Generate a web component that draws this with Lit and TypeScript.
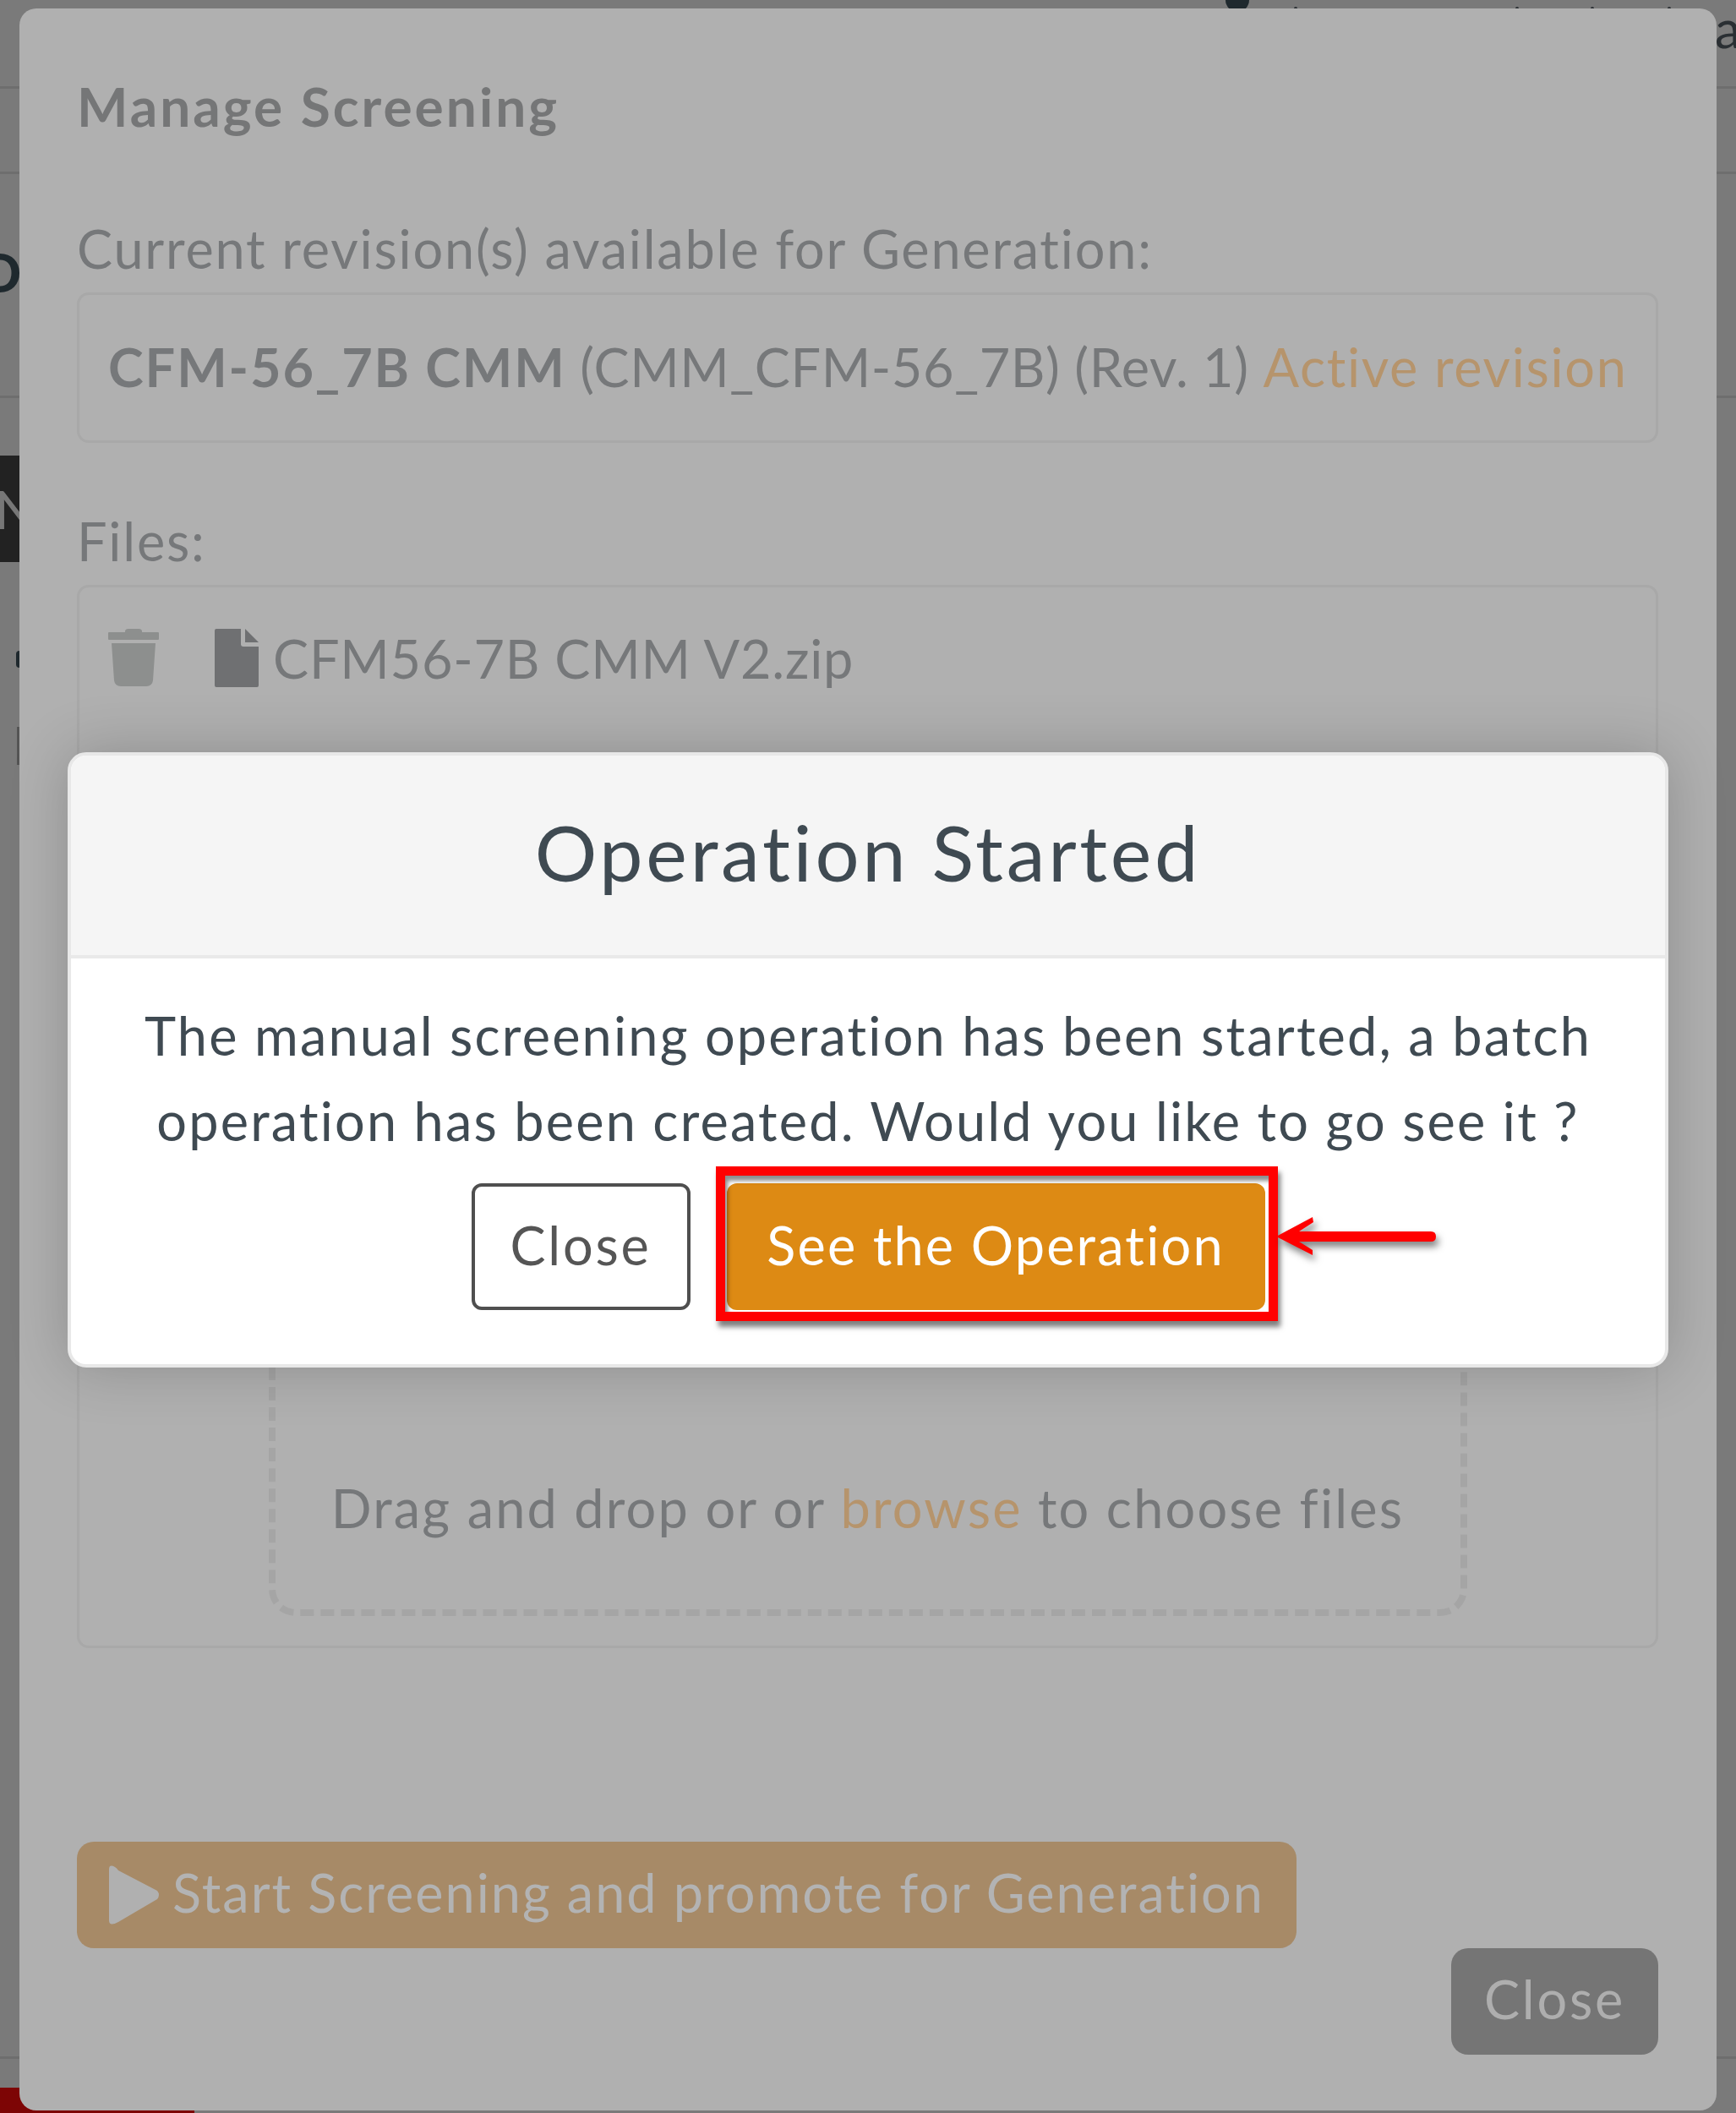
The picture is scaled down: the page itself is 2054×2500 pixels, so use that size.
import { LitElement, html, css } from "lit";
import { customElement } from "lit/decorators.js";

@customElement("app-root")
export class AppRoot extends LitElement {
  static styles = css`
    :host { display: block; position: relative; width: 2054px; height: 2500px; overflow: hidden; background: #7a7a7a; font-family: Lato, "Noto Sans", sans-serif; }
    * { box-sizing: border-box; }
    .behind { position: absolute; }
    .ln { left: 0; width: 2054px; height: 3px; background: #6e6e6e; }
    .l1 { top: 102px; } .l2 { top: 203px; } .l3 { top: 468px; } .l4 { top: 2433px; }
    .d { left: -22px; top: 291px; font: 900 62px/1 Lato, sans-serif; color: #1f292e; }
    .nbox { left: 0; top: 539px; width: 23px; height: 126px; background: #222; color: #777; font: 400 62px/126px Lato, sans-serif; overflow: hidden; text-indent: -6px; }
    .dot { left: 19px; top: 770px; width: 8px; height: 20px; border-radius: 4px; background: #1f292e; }
    .tick { left: 20px; top: 860px; width: 3px; height: 45px; background: #555; }
    .redbar { left: 0; top: 2470px; width: 230px; height: 30px; background: #7d0505; }
    .blob { left: 1450px; top: -14px; width: 28px; height: 28px; border-radius: 50%; background: #1f292e; }
    .sp { top: 8px; width: 4px; height: 4px; background: #2a2f33; border-radius: 50%; }
    .s1 { left: 1531px; } .s2 { left: 1793px; } .s3 { left: 1882px; } .s4 { left: 1973px; }
    .a { left: 2029px; top: 2px; font: 400 62px/1 Lato, sans-serif; color: #2a2f33; }

    .modal { position: absolute; left: 23px; top: 10px; width: 2008px; height: 2487px; background: #b0b0b0; border-radius: 20px; padding: 0 69px 0 68px; display: flex; flex-direction: column; color: #76787a; font-size: 63px; letter-spacing: 1.8px; }
    .title { margin: 80px 0 0; font-size: 64px; line-height: 72px; font-weight: 700; color: #757677; letter-spacing: 3px; }
    .label { line-height: 72px; }
    .l-rev { margin-top: 96px; }
    .l-files { margin-top: 80px; }
    .box { border: 3px solid #a8a8a8; border-radius: 14px; }
    .rev { margin-top: 16px; height: 178px; padding: 0 34px 3px; display: flex; align-items: center; white-space: pre; letter-spacing: .6px; }
    .rev b { font-weight: 700; letter-spacing: 1.9px; }
    .accent { color: #b6946c; }
    .rev .accent { letter-spacing: 1.7px; }
    .files { margin-top: 16px; height: 1258px; padding: 47px 34px 34px; display: flex; flex-direction: column; align-items: center; }
    .filerow { width: 100%; display: flex; align-items: center; height: 72px; }
    .trash { width: 60px; height: 68px; fill: #8d8f8e; flex: none; }
    .doc { width: 52px; height: 69px; margin-left: 66px; fill: #6f7072; flex: none; }
    .fname { margin-left: 17px; letter-spacing: .8px; }
    .drop { margin-top: auto; width: 1418px; height: 700px; border: 8px dashed #a5a5a5; border-radius: 32px; margin-bottom: 1px; display: flex; flex-direction: column; justify-content: flex-end; align-items: center; padding-bottom: 84px; line-height: 72px; letter-spacing: 2.2px; }
    .actions { margin-top: 229px; }
    .start { width: 1443px; height: 126px; border-radius: 20px; background: #a78a67; color: #b3b3b3; display: flex; align-items: center; padding: 0 0 7px 38px; letter-spacing: 2px; }
    .start svg { width: 60px; height: 70px; fill: #b0b0b0; flex: none; margin: 7px 15px 0 0; }
    .closewrap { display: flex; justify-content: flex-end; }
    .closeb { width: 245px; height: 126px; border-radius: 20px; background: #757575; color: #aeaeae; display: flex; align-items: center; justify-content: center; padding-bottom: 7px; letter-spacing: 2.8px; }

    .alert { position: absolute; left: 80px; top: 890px; width: 1894px; height: 728px; background: #fff; border: 4px solid #e8e8e8; border-radius: 22px; box-shadow: 0 0 70px rgba(0,0,0,.2); color: #3f4a52; display: flex; flex-direction: column; font-size: 63px; letter-spacing: 2.2px; }
    .ahead { height: 240px; background: #f5f5f5; border-bottom: 4px solid #e9e9e9; border-radius: 18px 18px 0 0; display: flex; align-items: center; justify-content: center; font-size: 92px; letter-spacing: 3.7px; padding-bottom: 10px; }
    .abody { flex: 1; display: flex; flex-direction: column; align-items: center; padding-top: 40px; line-height: 101px; text-align: center; }
    .abtns { display: flex; margin-top: 24px; gap: 43px; align-items: stretch; position: relative; }
    .bt { height: 150px; border-radius: 12px; display: flex; align-items: center; justify-content: center; padding-bottom: 6px; }
    .out { width: 259px; border: 4px solid #4f4f4f; color: #555; letter-spacing: 2.8px; }
    .pri { width: 637px; background: #dd8a14; color: #fff; }
    .rect { position: absolute; left: 289px; top: -20px; width: 665px; height: 183px; border: 11px solid #f00; box-shadow: 3px 7px 6px rgba(0,0,0,.5), inset 3px 6px 5px rgba(0,0,0,.45); }
    .arrow { position: absolute; left: 952px; top: 40px; width: 200px; height: 60px; overflow: visible; filter: drop-shadow(3px 6px 4px rgba(0,0,0,.5)); }
  `;

  render() {
    return html`
      <div class="behind ln l1"></div><div class="behind ln l2"></div><div class="behind ln l3"></div><div class="behind ln l4"></div>
      <div class="behind d">D</div>
      <div class="behind nbox">N</div>
      <div class="behind dot"></div><div class="behind tick"></div>
      <div class="behind redbar"></div>
      <div class="behind blob"></div>
      <div class="behind sp s1"></div><div class="behind sp s2"></div><div class="behind sp s3"></div><div class="behind sp s4"></div>
      <div class="behind a">a</div>

      <section class="modal">
        <h2 class="title">Manage Screening</h2>
        <div class="label l-rev">Current revision(s) available for Generation:</div>
        <div class="box rev"><b>CFM-56_7B CMM</b> (CMM_CFM-56_7B) (Rev. 1) <span class="accent">Active revision</span></div>
        <div class="label l-files">Files:</div>
        <div class="box files">
          <div class="filerow">
            <svg class="trash" viewBox="0 0 60 68"><path d="M20 3Q20 0 24 0H36Q40 0 40 3V4H59Q60 4 60 5V12Q60 13 59 13H1Q0 13 0 12V5Q0 4 1 4H20ZM4 17H56L53 61Q52 68 45 68H15Q8 68 7 61Z"/></svg>
            <svg class="doc" viewBox="0 0 52 69"><path d="M0 2Q0 0 2 0H31V18Q31 21 34 21H52V67Q52 69 50 69H2Q0 69 0 67ZM36 0 52 16H36Z"/></svg>
            <span class="fname">CFM56-7B CMM V2.zip</span>
          </div>
          <div class="drop"><div>Drag and drop or or <span class="accent">browse</span> to choose files</div></div>
        </div>
        <div class="actions">
          <div class="start">
            <svg viewBox="0 0 60 70"><path d="M0 5Q0 -2 7 2Q9 3 11 6L57 30Q61 35 57 40L11 67Q0 73 0 65Z"/></svg>
            <span>Start Screening and promote for Generation</span>
          </div>
          <div class="closewrap"><div class="closeb">Close</div></div>
        </div>
      </section>

      <section class="alert">
        <div class="ahead">Operation Started</div>
        <div class="abody">
          <div>The manual screening operation has been started, a batch<br />operation has been created. Would you like to go see it ?</div>
          <div class="abtns">
            <div class="bt out">Close</div>
            <div class="bt pri">See the Operation</div>
            <div class="rect"></div>
            <svg class="arrow" viewBox="0 0 200 60"><path d="M0 23 43 0 44 6 27 17H183Q189 17 189 23T183 29H27L43 39 43 45Z" fill="#f00"/></svg>
          </div>
        </div>
      </section>
    `;
  }
}
